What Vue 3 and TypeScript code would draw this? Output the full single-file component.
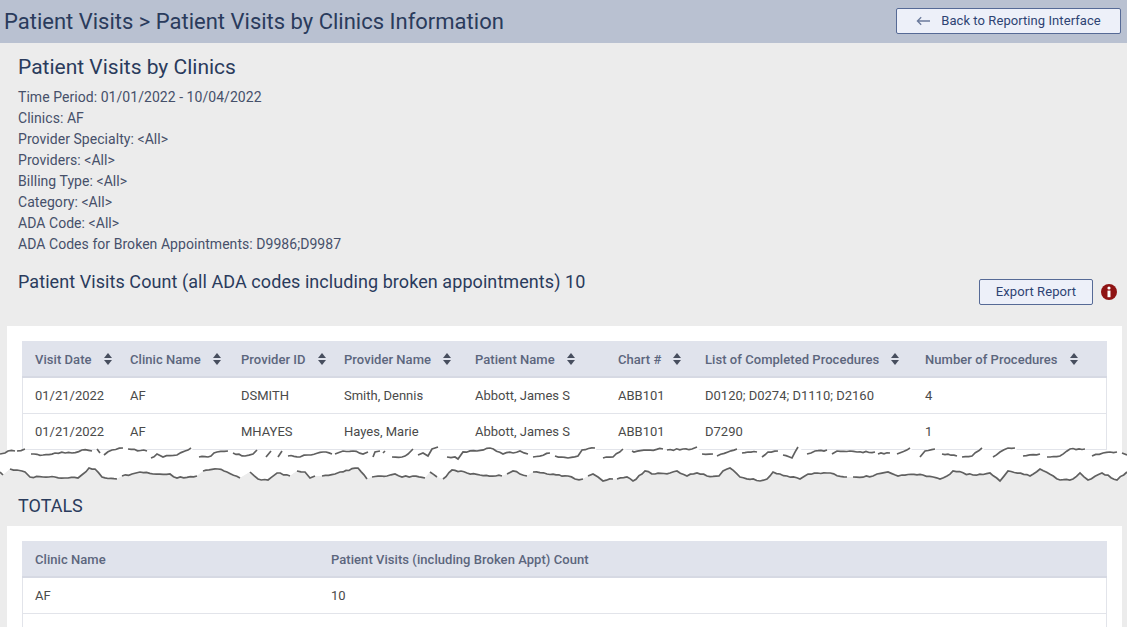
<script setup lang="ts">
interface Col { label: string; cls: string }
const columns: Col[] = [
  { label: 'Visit Date', cls: 'c1' },
  { label: 'Clinic Name', cls: 'c2' },
  { label: 'Provider ID', cls: 'c3' },
  { label: 'Provider Name', cls: 'c4' },
  { label: 'Patient Name', cls: 'c5' },
  { label: 'Chart #', cls: 'c6' },
  { label: 'List of Completed Procedures', cls: 'c7' },
  { label: 'Number of Procedures', cls: 'c8' },
]
const rows: string[][] = [
  ['01/21/2022', 'AF', 'DSMITH', 'Smith, Dennis', 'Abbott, James S', 'ABB101', 'D0120; D0274; D1110; D2160', '4'],
  ['01/21/2022', 'AF', 'MHAYES', 'Hayes, Marie', 'Abbott, James S', 'ABB101', 'D7290', '1'],
]
const meta: string[] = [
  'Time Period: 01/01/2022 - 10/04/2022',
  'Clinics: AF',
  'Provider Specialty: <All>',
  'Providers: <All>',
  'Billing Type: <All>',
  'Category: <All>',
  'ADA Code: <All>',
  'ADA Codes for Broken Appointments: D9986;D9987',
]
// Torn-paper strokes traced from the reference; y = page y - 444. "|" marks a gap in the stroke.
const topData = '0,10 5,9 8,7 15,7|17,7 25,5|31,10 43,11 55,9 72,9 82,6 92,7|97,5 100,9|104,11 112,6 123,4|128,5 147,7|151,14 157,10 163,13 177,11 185,7 191,4|199,13 208,13 217,8 228,7|233,9 245,12 253,10 257,6|266,13 271,7|278,13 282,7|288,12 300,13 308,11 323,8 332,10|335,10 343,7 353,7 363,10 368,8|373,13 375,8 380,7|383,9 385,7|392,13 402,13 408,10 413,5|418,11 423,9 428,12 432,5 438,3|447,13 455,13 458,15 463,8 477,7 490,4 503,10 520,7 528,10|533,13 550,9|555,12 568,14 578,12 582,6 595,4|603,14 613,13 623,5|632,7 634,8 647,6 663,5|667,6 683,5 692,5 697,3|702,10 713,10|717,12 728,8 737,5|742,9 757,8|762,13 768,8 778,7|783,11 792,14 798,3|807,10 815,7 827,6|832,10 837,7 850,7 857,8 875,8|878,10 890,9|897,10 910,4|920,13 925,7 935,5|942,10 957,12|962,13 972,12 982,4|993,13 1000,8 1008,4 1015,4|1023,12 1040,10|1047,13 1060,12 1070,5 1085,5|1092,12 1103,9 1117,8|1122,9 1127,11'
const bottomData = '0,28 3,31|10,25 17,26 22,27 25,28 30,33 43,33 55,33 68,34 78,34 83,30 89,24 95,25 102,33 117,35|122,32 132,30 140,28 153,30 170,30 177,34 197,32|203,27 218,25 227,28 240,34|250,28 258,35 268,36 277,29 290,32|297,27 305,28 310,34 315,32|322,32 335,30 340,28 358,24 367,35|372,33 387,32 395,30 402,33 413,32 425,34|430,28 437,33|443,35 452,26 467,29 480,31 502,32|507,30 513,27 527,32|533,28 547,30 568,32 575,35 583,35|588,32 593,30 598,33 603,37 613,35|617,35 627,33 633,37 642,30 645,27 655,30 670,29 677,27 687,32 697,29 707,32 719,32 723,27 730,24 740,33 760,37 767,35 773,28 787,32 800,35 808,30 827,29 847,33|853,33 873,32 877,30 888,28 898,32 902,31 923,31 940,35 947,32 953,27 973,31 990,29 1000,37 1008,27 1030,32 1040,25 1060,36 1073,35 1080,29 1088,36 1102,29 1117,36 1127,28'

// Subdivide each traced segment and roughen it with a fixed sequence, so the tear looks frayed.
let seed = 7
const wobble = (): number => {
  seed = (seed * 137 + 59) % 251
  return (seed / 251 - 0.5) * 1.6
}
const fray = (d: string): string[][] =>
  d.split('|').map((stroke) => {
    const pts = stroke.split(' ').map((p) => p.split(',').map(Number))
    const out: string[] = []
    pts.forEach(([x, y], i) => {
      out.push(`${x},${y}`)
      const next = pts[i + 1]
      if (!next) return
      const steps = Math.floor((next[0] - x) / 3)
      for (let s = 1; s < steps; s++) {
        const t = s / steps
        const ny = y + (next[1] - y) * t + wobble()
        out.push(`${(x + (next[0] - x) * t).toFixed(1)},${ny.toFixed(1)}`)
      }
    })
    return out
  })

const topStrokes = fray(topData)
const bottomStrokes = fray(bottomData)
const toPath = (s: string[][]): string => s.map((p) => 'M' + p.join('L')).join('')

const topEdge = toPath(topStrokes)
const bottomEdge = toPath(bottomStrokes)
const whiteArea = 'M' + [...topStrokes.flat(), ...bottomStrokes.flat().reverse()].join('L') + 'Z'
const greyBelow = 'M' + bottomStrokes.flat().join('L') + 'L1127,48L0,48Z'
</script>

<template>
  <div class="page">
    <header class="topbar">
      <h1 class="crumb">Patient Visits &gt; Patient Visits by Clinics Information</h1>
      <button class="btn back" type="button">
        <svg class="arrow" width="14" height="10" viewBox="0 0 14 10" aria-hidden="true">
          <path d="M14 5H1.5M5.2 1.2L1.4 5L5.2 8.8" fill="none" stroke="#6b7a9c" stroke-width="1.3" />
        </svg>
        <span>Back to Reporting Interface</span>
      </button>
    </header>

    <section class="summary">
      <h2 class="report-title">Patient Visits by Clinics</h2>
      <p v-for="line in meta" :key="line" class="meta">{{ line }}</p>
      <div class="count-row">
        <h3 class="count">Patient Visits Count (all ADA codes including broken appointments) 10</h3>
        <div class="actions">
          <button class="btn export" type="button">Export Report</button>
          <svg class="info" width="16" height="16" viewBox="0 0 16 16" aria-label="info">
            <circle cx="8" cy="8" r="8" fill="#8f1414" />
            <circle cx="8" cy="4" r="1.6" fill="#fff" />
            <rect x="6.5" y="6.6" width="3" height="6.6" fill="#fff" />
          </svg>
        </div>
      </div>
    </section>

    <div class="card card-top">
      <table class="grid">
        <colgroup>
          <col v-for="c in columns" :key="c.cls" :class="c.cls" />
        </colgroup>
        <thead>
          <tr>
            <th v-for="c in columns" :key="c.label">
              <span class="th-inner">
                {{ c.label }}
                <svg class="sort" width="8" height="12" viewBox="0 0 8 12" aria-hidden="true">
                  <path d="M4 0L8 5H0Z" fill="#474e5e" />
                  <path d="M4 12L8 7H0Z" fill="#474e5e" />
                </svg>
              </span>
            </th>
          </tr>
        </thead>
        <tbody>
          <tr v-for="(r, i) in rows" :key="i">
            <td v-for="(v, j) in r" :key="j">{{ v }}</td>
          </tr>
        </tbody>
      </table>
    </div>

    <svg class="tear" width="1127" height="48" viewBox="0 0 1127 48" aria-hidden="true">
      <rect x="7" y="6" width="1115" height="10" fill="#fff" />
      <path :d="whiteArea" fill="#fff" />
      <path :d="greyBelow" fill="#ececec" />
      <path :d="topEdge" fill="none" stroke="#606060" stroke-width="1.7" />
      <path :d="bottomEdge" fill="none" stroke="#606060" stroke-width="1.7" />
    </svg>

    <h3 class="totals-title">TOTALS</h3>

    <div class="card card-bottom">
      <table class="grid">
        <colgroup>
          <col class="t1" />
          <col />
        </colgroup>
        <thead>
          <tr>
            <th>Clinic Name</th>
            <th>Patient Visits (including Broken Appt) Count</th>
          </tr>
        </thead>
        <tbody>
          <tr>
            <td>AF</td>
            <td>10</td>
          </tr>
          <tr>
            <td></td>
            <td></td>
          </tr>
        </tbody>
      </table>
    </div>
  </div>
</template>

<style scoped>
.page {
  width: 1127px;
  height: 627px;
  overflow: hidden;
  background: #ececec;
  font-family: Roboto, "Liberation Sans", sans-serif;
  color: #2d3a57;
}
.topbar {
  height: 43px;
  background: #b9c1d1;
  display: flex;
  align-items: center;
  justify-content: space-between;
  padding: 0 6px 0 4px;
  box-sizing: border-box;
}
.crumb {
  margin: 0;
  font-size: 22px;
  font-weight: 400;
  color: #2a3b5c;
}
.btn {
  font-family: inherit;
  font-size: 13px;
  letter-spacing: 0.07px;
  color: #2d4373;
  background: #edf0f9;
  border: 1px solid #566a96;
  border-radius: 2px;
  box-sizing: border-box;
  padding: 0 0 1px;
}
.back {
  width: 225px;
  height: 26px;
  margin-top: -1px;
  display: flex;
  align-items: center;
  justify-content: center;
  gap: 11px;
}
.summary {
  padding: 12px 34px 0 18px;
}
.report-title {
  margin: 0 0 8px;
  font-size: 21px;
  line-height: 24px;
  font-weight: 400;
  color: #2a3b5c;
}
.meta {
  margin: 0;
  font-size: 14px;
  letter-spacing: 0.05px;
  line-height: 21px;
  color: #46506a;
}
.count-row {
  display: flex;
  justify-content: space-between;
  align-items: flex-start;
  height: 56px;
  margin-top: 15px;
}
.count {
  margin: 0;
  font-size: 18px;
  letter-spacing: 0.07px;
  line-height: 24px;
  font-weight: 400;
  color: #2a3b5c;
}
.actions {
  display: flex;
  align-items: center;
  gap: 8px;
  margin-top: 9px;
  margin-right: -24px;
}
.export {
  width: 114px;
  height: 26px;
}
.card {
  margin: 0 5px 0 7px;
  background: #fff;
  padding: 15px 15px 0;
  overflow: hidden;
}
.card-top {
  height: 109px;
}
.card-bottom {
  height: 101px;
}
.grid {
  width: 1085px;
  border-collapse: separate;
  border-spacing: 0;
  table-layout: fixed;
  font-size: 13px;
}
.c1 { width: 95px; }
.c2 { width: 111px; }
.c3 { width: 103px; }
.c4 { width: 131px; }
.c5 { width: 143px; }
.c6 { width: 87px; }
.c7 { width: 220px; }
.c8 { width: 195px; }
.t1 { width: 296px; }
th {
  height: 37px;
  padding: 1px 0 0 13px;
  text-align: left;
  background: #e0e3ec;
  color: #5c667d;
  font-weight: 500;
  font-size: 13px;
  letter-spacing: 0.05px;
  border-bottom: 2px solid #d6d9e3;
  box-sizing: border-box;
  white-space: nowrap;
}
.th-inner {
  display: inline-flex;
  align-items: center;
  gap: 12px;
}
td {
  height: 36px;
  padding: 0 0 0 13px;
  color: #4a4a4a;
  border-bottom: 1px solid #e2e4ea;
  box-sizing: border-box;
  white-space: nowrap;
}
td:first-child {
  border-left: 1px solid #e2e4ea;
  padding-left: 12px;
}
td:last-child {
  border-right: 1px solid #e2e4ea;
}
.tear {
  display: block;
  margin-top: -6px;
  position: relative;
}
.totals-title {
  margin: 0;
  height: 34px;
  padding: 2px 0 0 18px;
  box-sizing: border-box;
  font-size: 18px;
  line-height: 24px;
  font-weight: 400;
  color: #2a3b5c;
}
</style>

<style>
html, body {
  margin: 0;
  overflow: hidden;
}
</style>
